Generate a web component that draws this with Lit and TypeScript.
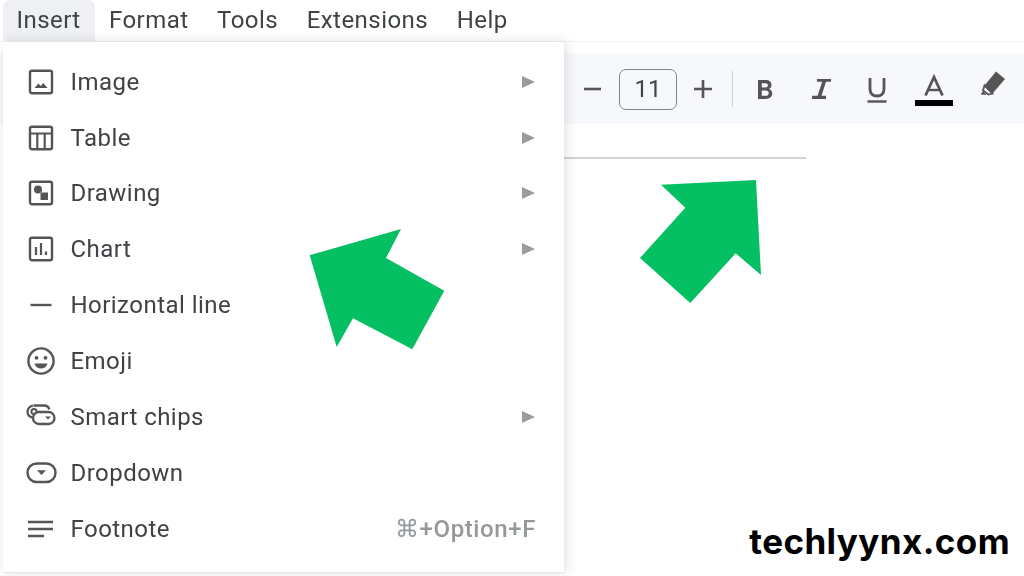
import { LitElement, html, css, svg } from "lit";
import { customElement } from "lit/decorators.js";

const ic: Record<string, unknown> = {
  image: svg`<rect x="4" y="2.800" width="22" height="22.400" rx="2" fill="none" stroke-width="2.400"/><path d="M8.500 20l3.800-4.600 2.500 2.600 2.400-3 4.300 5z" stroke="none" fill="#555"/>`,
  table: svg`<rect x="4" y="2.800" width="22" height="22.400" rx="2" fill="none" stroke-width="2.400"/><path d="M4 9.500h22M11.300 9.500V25M18.700 9.500V25" fill="none" stroke-width="2.200"/>`,
  drawing: svg`<rect x="4" y="2.800" width="22" height="22.400" rx="2" fill="none" stroke-width="2.400"/><circle cx="12" cy="10.500" r="4" stroke="none" fill="#555"/><rect x="14.500" y="13.500" width="7.500" height="7.500" stroke="none" fill="#555"/>`,
  chart: svg`<rect x="4" y="2.800" width="22" height="22.400" rx="2" fill="none" stroke-width="2.400"/><path d="M10 12v8M15 8v12M20 16.500V20" fill="none" stroke-width="2.200"/>`,
  line: svg`<path d="M4.500 14h21" fill="none" stroke-width="2.400"/>`,
  emoji: svg`<circle cx="15" cy="14" r="12.600" fill="none" stroke-width="2.400"/><circle cx="10.500" cy="10.800" r="1.900" stroke="none" fill="#555"/><circle cx="19.500" cy="10.800" r="1.900" stroke="none" fill="#555"/><path d="M8.500 16.500h13c-.8 3.400-3.400 5-6.500 5s-5.700-1.600-6.500-5z" stroke="none" fill="#555"/>`,
  chips: svg`<path d="M8 2.500h10c3 0 4.800 1.700 5.200 4" fill="none" stroke-width="2.300"/><path d="M6.500 14.500C3.500 13.800 1.500 11.500 1.500 8.700c0-3.300 2.700-6 6-6" fill="none" stroke-width="2.300"/><circle cx="8" cy="8.500" r="2.600" fill="none" stroke-width="2"/><rect x="7" y="9" width="21.500" height="12" rx="6" fill="#fff" stroke-width="2.300"/><path d="M19 13.500h6l-3 3z" stroke="none" fill="#555"/>`,
  dropdown: svg`<rect x="1.500" y="4.500" width="28" height="18.500" rx="9.200" fill="none" stroke-width="2.400"/><path d="M11 11.200h9l-4.500 4.800z" stroke="none" fill="#555"/>`,
  footnote: svg`<path d="M2 7h25M2 14h25M2 21h16" fill="none" stroke-width="2.400"/>`,
};

const items = [
  ["Image", "image", true], ["Table", "table", true], ["Drawing", "drawing", true],
  ["Chart", "chart", true], ["Horizontal line", "line", false], ["Emoji", "emoji", false],
  ["Smart chips", "chips", true], ["Dropdown", "dropdown", false], ["Footnote", "footnote", false],
] as const;

@customElement("app-root")
export class AppRoot extends LitElement {
  static styles = css`
    :host { display: block; width: 1024px; height: 576px; position: relative; overflow: hidden; background: #fff;
      font-family: Roboto, "Liberation Sans", sans-serif; color: #3f4346; }
    .bar { display: flex; height: 42px; padding-left: 3px; border-bottom: 1px solid #f1f2f3; box-sizing: border-box; font-size: 24px; letter-spacing: .45px; filter: blur(.35px); }
    .m { padding: 0 14.300px; line-height: 40px; }
    .m.on { background: #eef0f3; border-radius: 7px 7px 0 0; padding: 0 14px 0 13.500px; }
    .tools { margin-top: 12px; height: 70px; background: #f7f8fc; display: flex; align-items: center; padding-left: 563px; box-sizing: border-box; filter: blur(.35px); }
    .sep { width: 1px; height: 36px; background: #d0d2d6; }
    .tb { width: 30px; height: 30px; display: block; }
    .box { width: 58px; height: 41px; box-sizing: border-box; border: 1.500px solid #83878b; border-radius: 7px; display: flex; align-items: center; justify-content: center; font-size: 24px; margin: 0 11px; }
    .rule { margin: 33px 0 0 564px; width: 242px; height: 2px; background: #d3d4d6; }
    .menu { position: absolute; left: 3px; top: 42px; width: 561px; height: 531px; background: #fff; padding-top: 11.700px; box-sizing: border-box;
      box-shadow: 2px 0 10px rgba(60,64,67,.16); border-bottom: 1px solid #e6e6e6; }
    .row { display: flex; align-items: center; height: 55.900px; padding-right: 28px; font-size: 24px; letter-spacing: .46px; filter: blur(.35px); }
    .row svg { width: 34px; height: 28px; margin: 0 10.500px 0 23px; flex: none; stroke: #555; }
    .label { flex: 1; }
    .tri { width: 0; height: 0; border-left: 13px solid #9b9b9b; border-top: 6.500px solid transparent; border-bottom: 6.500px solid transparent; margin-right: 1px; }
    .short { color: #94989b; font-weight: 500; letter-spacing: .6px; }
    .arrows { position: absolute; inset: 0; width: 1024px; height: 576px; pointer-events: none; }
    .brand { position: absolute; right: 14px; top: 521px; font-family: Inter, sans-serif; font-weight: 700; font-size: 35px; letter-spacing: .4px; line-height: 40px; color: #000; }
  `;
  render() {
    return html`
      <div class="bar">
        <div class="m on">Insert</div><div class="m">Format</div><div class="m">Tools</div><div class="m">Extensions</div><div class="m">Help</div>
      </div>
      <div class="tools">
        <div class="sep"></div>
        <svg class="tb" style="margin-left:14px" viewBox="0 0 30 30" stroke="#555" stroke-width="2.600" fill="none"><path d="M6 15h17"/></svg>
        <div class="box">11</div>
        <svg class="tb" viewBox="0 0 30 30" stroke="#555" stroke-width="2.600" fill="none"><path d="M6 15h18M15 6v18"/></svg>
        <div class="sep" style="margin:0 17px 0 14px"></div>
        <svg class="tb" viewBox="0 0 30 30" fill="#555"><path fill-rule="evenodd" d="M8 6h7.500c3.800 0 6 1.900 6 5 0 1.900-.9 3.200-2.400 3.900 2 .7 3.200 2.200 3.200 4.400 0 3.500-2.600 5.700-6.600 5.700H8zm3.800 3.200v4.300h3.300c1.900 0 2.800-.8 2.800-2.200s-.9-2.100-2.800-2.100zm0 7.400v5.200h3.800c1.900 0 3.100-1 3.100-2.600s-1.200-2.600-3.100-2.600z"/></svg>
        <svg class="tb" style="margin-left:26px" viewBox="0 0 30 30" fill="#555"><path d="M11 5h14v2.800h-5l-4.500 14h4.500V25H6v-3.200h5.600l4.500-14H11z"/></svg>
        <svg class="tb" style="margin-left:26px" viewBox="0 0 30 30" fill="none" stroke="#555"><path d="M8 4v11c0 4.500 2.800 7 7 7s7-2.500 7-7V4" stroke-width="2.800"/><path d="M5.500 27.500h19" stroke-width="2.400"/></svg>
        <svg class="tb" style="margin-left:23px;width:38px;height:42px" viewBox="0 0 38 42"><path d="M10.500 27.500 19 9l8.500 18.500" fill="none" stroke="#555" stroke-width="2.800"/><path d="M14 22h10" stroke="#555" stroke-width="2.400"/><rect x="0" y="32" width="38" height="6" fill="#000"/></svg>
        <svg class="tb" style="margin-left:25px;margin-top:-10px" viewBox="0 0 30 30"><path d="M18 2.500l9 7.500-12.500 14.500-8-8z" fill="#555"/><path d="M6.500 16.500l8 8-4 1-5.500-4z" fill="none" stroke="#555" stroke-width="1.800"/><path d="M5 22l-2.500 3.500 6 .5z" fill="#555"/></svg>
      </div>
      <div class="rule"></div>
      <div class="menu">
        ${items.map(([t, i, sub]) => html`<div class="row"><svg viewBox="0 0 34 28">${ic[i]}</svg><span class="label">${t}</span>${sub ? html`<span class="tri"></span>` : t === "Footnote" ? html`<span class="short">⌘+Option+F</span>` : ""}</div>`)}
      </div>
      <svg class="arrows" viewBox="0 0 1024 576"><polygon fill="#05bf63" points="309.700,255.300 401,229 386,258 444.300,290.700 412.300,349.300 353,318.300 336.700,347"/><polygon fill="#05bf63" points="661,184.700 756,180 761,275 735.700,253.300 690.300,303 640,258 685.300,207.700"/></svg>
      <div class="brand">techlyynx.com</div>
    `;
  }
}
